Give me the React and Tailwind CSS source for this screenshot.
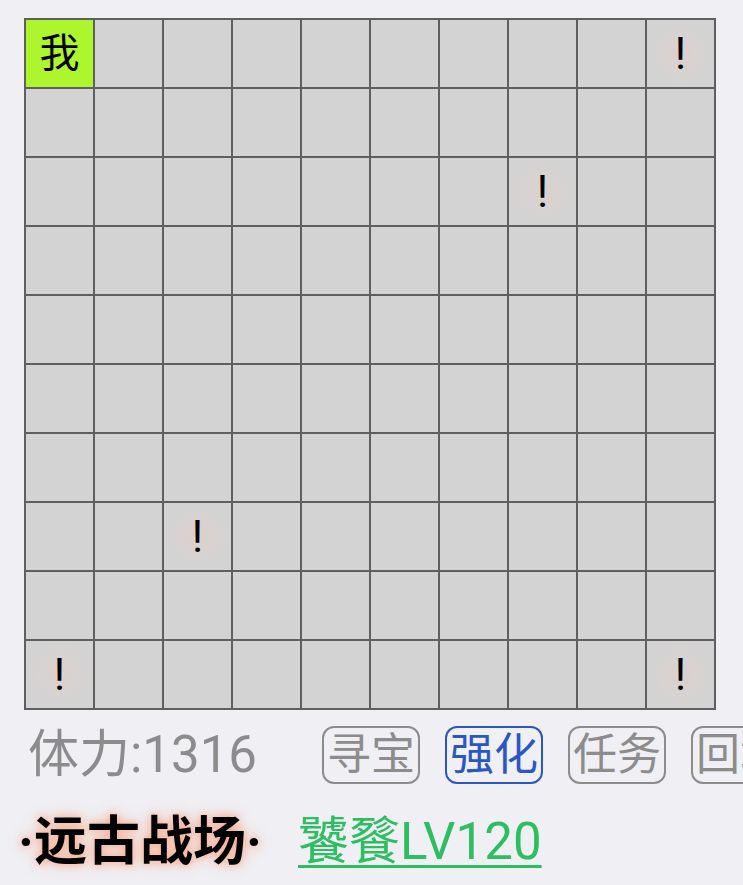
import React from "react";

// board markers: "me" for the player, "!" for events
const marks = {
  "0-0": "me",
  "0-9": "!",
  "2-7": "!",
  "7-2": "!",
  "9-0": "!",
  "9-9": "!",
};

const buttons = [
  { label: "寻宝", active: false },
  { label: "强化", active: true },
  { label: "任务", active: false },
  { label: "回城", active: false },
];

const Cell = ({ mark }) => {
  if (mark === "me") {
    return (
      <div className="flex h-[67px] w-[67px] items-center justify-center bg-[#adf52c] text-[40px] leading-none text-black">
        我
      </div>
    );
  }
  if (mark === "!") {
    return (
      <div className="flex h-[67px] w-[67px] items-center justify-center bg-[radial-gradient(circle,#ddd0cc_0%,#d6d3d2_45%,#d3d3d3_75%)] text-[44px] leading-none text-black">
        !
      </div>
    );
  }
  return <div className="h-[67px] w-[67px] bg-[#d3d3d3]" />;
};

export default function App() {
  const rows = Array.from({ length: 10 }, (_, r) => r);
  const cols = Array.from({ length: 10 }, (_, c) => c);

  return (
    <div className="min-h-[885px] w-full overflow-hidden bg-[#efeff4] pl-[24px] pt-[18px] font-['Roboto','Noto_Sans_CJK_SC',sans-serif]">
      {/* Board */}
      <div className="grid w-[692px] grid-cols-10 gap-[2px] bg-[#5f5f5f] p-[2px]">
        {rows.map((r) =>
          cols.map((c) => <Cell key={`${r}-${c}`} mark={marks[`${r}-${c}`]} />)
        )}
      </div>

      {/* Status + actions */}
      <div className="mt-[16px] flex items-center whitespace-nowrap">
        <span className="ml-[4px] w-[294px] shrink-0 text-[51px] leading-[58px] text-[#8c8c8c]">
          体力:1316
        </span>
        <div className="flex shrink-0 gap-[25px]">
          {buttons.map((b) => (
            <button
              key={b.label}
              className={
                b.active
                  ? "h-[58px] w-[98px] shrink-0 rounded-[12px] border-2 border-[#2b56c6] text-[44px] leading-none text-[#2b56c6]"
                  : "h-[58px] w-[98px] shrink-0 rounded-[12px] border-2 border-[#8c8c8c] text-[44px] leading-none text-[#8c8c8c]"
              }
            >
              {b.label}
            </button>
          ))}
        </div>
      </div>

      {/* Location + boss */}
      <div className="mt-[28px] flex items-center whitespace-nowrap">
        <span className="-ml-[6px] shrink-0 text-[53px] font-bold leading-[60px] text-black [text-shadow:0_0_8px_#f6a88c,0_0_16px_#f8c0aa]">
          ·远古战场·
        </span>
        <span className="ml-[36px] shrink-0 text-[51px] leading-[60px] text-[#2dbe62] underline decoration-[3px] underline-offset-[6px]">
          饕餮LV120
        </span>
      </div>
    </div>
  );
}
